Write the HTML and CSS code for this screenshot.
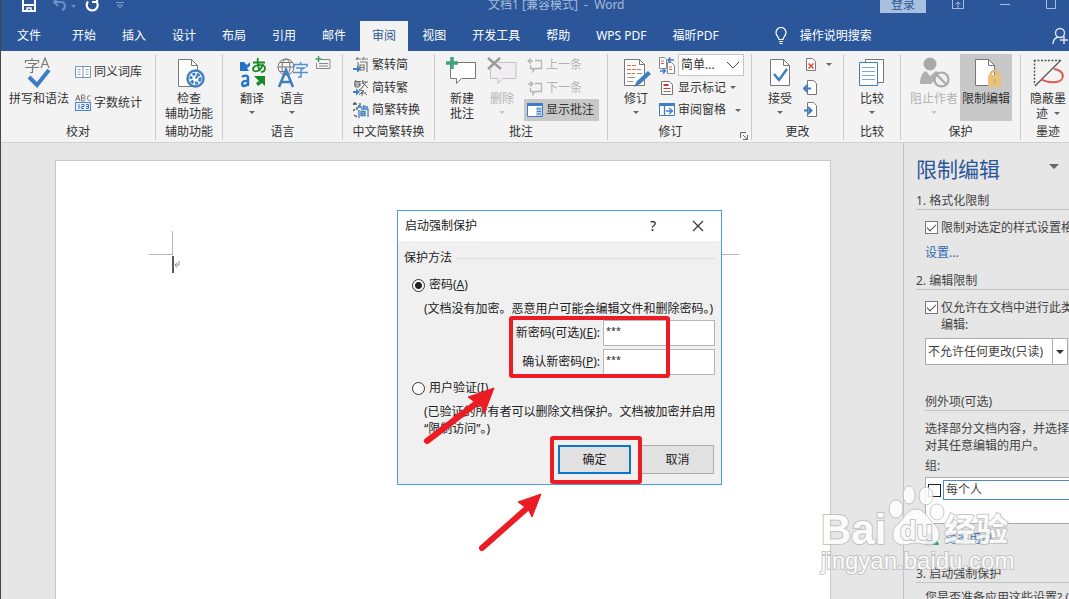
FILE: index.html
```html
<!DOCTYPE html>
<html lang="zh-CN">
<head>
<meta charset="utf-8">
<title>文档1 [兼容模式] - Word</title>
<link rel="stylesheet" href="styles.css">
</head>
<body>
<div class="app">
  <header class="titlebar">
    <div class="quick">
      <button class="ghost" aria-label="保存"><svg width="16" height="16" viewBox="0 0 16 16" fill="none" stroke="#fff" stroke-width="2"><path d="M2 1v13h12V1M2 8h12"/><path d="M6 14v-3h4v3" stroke-width="1.5"/></svg></button>
      <button class="ghost undo" aria-label="撤消"><svg width="26" height="16" viewBox="0 0 26 16" fill="none" stroke="#6f8fc4" stroke-width="2"><path d="M7 1L3 5l4 4M3 5h7c5 0 5 7 1 8"/><path d="M20 8h5l-2.500 3z" fill="#6f8fc4" stroke="none"/></svg></button>
      <button class="ghost" aria-label="重复"><svg width="16" height="16" viewBox="0 0 16 16" fill="none" stroke="#fff" stroke-width="2.200"><path d="M12 4A5.500 5.500 0 1 1 4 4.500M8 5h5V0"/></svg></button>
      <button class="ghost more" aria-label="自定义"><svg width="10" height="16" viewBox="0 0 10 16" fill="none" stroke="#7f9bcb"><path d="M1 5.500h8M2 8l3 3 3-3z"/></svg></button>
    </div>
    <div class="doc-title">文档1 [兼容模式]&nbsp; -&nbsp; Word</div>
    <div class="window-tools">
      <button class="login">登录</button>
      <button class="ghost" aria-label="功能区选项"><svg width="14" height="16" viewBox="0 0 14 16" fill="none" stroke="#a9bddd"><path d="M1.500 2.500h11v9h-11zM7 11V5M4.500 7.500L7 5l2.500 2.500"/></svg></button>
      <button class="ghost" aria-label="最小化"><svg width="12" height="16" viewBox="0 0 12 16" stroke="#a9bddd"><path d="M1 7.500h10"/></svg></button>
      <button class="ghost" aria-label="最大化"><svg width="12" height="16" viewBox="0 0 12 16" fill="none" stroke="#a9bddd"><path d="M1.500 1.500h9v10h-9z"/></svg></button>
    </div>
  </header>

  <nav class="tabs">
    <button class="tab file">文件</button>
    <button class="tab">开始</button>
    <button class="tab">插入</button>
    <button class="tab">设计</button>
    <button class="tab">布局</button>
    <button class="tab">引用</button>
    <button class="tab">邮件</button>
    <button class="tab active">审阅</button>
    <button class="tab">视图</button>
    <button class="tab">开发工具</button>
    <button class="tab">帮助</button>
    <button class="tab">WPS PDF</button>
    <button class="tab">福昕PDF</button>
    <button class="tell"><svg width="12" height="18" viewBox="0 0 12 18" fill="none" stroke="#fff" stroke-width="1.200"><path d="M4 12.500c0-2.500-3-3.500-3-7a5 5 0 0 1 10 0c0 3.500-3 4.500-3 7zM4 14.500h4M4.500 16.500h3"/></svg>操作说明搜索</button>
    <button class="ghost share" aria-label="共享"><svg width="16" height="18" viewBox="0 0 16 18" fill="none" stroke="#dfe8f5" stroke-width="1.400"><circle cx="8" cy="6" r="4.500"/><path d="M1 17c0-4 2-6 5-7M12 9v8M8 13h8"/></svg></button>
  </nav>

  <div class="ribbon">
    <section class="group g-proof">
      <div class="tools">
        <button class="big wide"><svg width="32" height="32" viewBox="0 0 32 32" fill="none"><g stroke="#7a7a7a" stroke-width="1.200"><path d="M9 1v2M2.500 6V3.500h13V6M5 6.500h8L9.500 9v6.500H7M2 10.500h14"/><path d="M18 11l4-10 4 10M19.500 7.500h5"/></g><path d="M6 20l8 8 12-15" stroke="#3b7cc4" stroke-width="4"/></svg><span>拼写和语法</span></button>
        <div class="stack two">
          <button class="small"><svg width="16" height="16" viewBox="0 0 16 16" fill="#fff" stroke="#7f93ad"><path d="M.500 2.500h15v11H.500zM8 2.500v11"/><path d="M2.500 5.500h3M2.500 8h3M2.500 10.500h3M10.500 5.500h3M10.500 8h3M10.500 10.500h3" stroke="#9ab"/></svg>同义词库</button>
          <button class="small"><svg width="16" height="18" viewBox="0 0 16 18" fill="none"><path d="M.500 7L3 1l2 6M1 5h4M6.500 1v6h2c2 0 2-3 0-3h-2M6.500 1h2c2 0 2 3 0 3M15.500 2c-4-2-4 6 0 4.500" stroke="#777"/><rect x=".500" y="8.500" width="15" height="8" fill="#e8f1fb" stroke="#4f86c6"/><path d="M4 10v5M6.500 10.500H9v2H6.500v2H9M11 10.500h2.500v4H11M11 12.500h2" stroke="#3c78c0"/></svg>字数统计</button>
        </div>
      </div>
      <h2>校对</h2>
    </section>

    <section class="group g-access">
      <div class="tools center">
        <button class="big"><svg width="32" height="32" viewBox="0 0 32 32"><path d="M5.500 2.500h13l6 6v21h-19z" fill="#fff" stroke="#777"/><path d="M18.500 2.500v6h6" fill="none" stroke="#777"/><circle cx="22.500" cy="21.500" r="8" fill="#fff" stroke="#3f7fc1" stroke-width="2.400"/><circle cx="22.500" cy="21.500" r="4.600" fill="none" stroke="#3f7fc1" stroke-width="3" stroke-dasharray="3 1.500"/><path d="M22.500 21.500l3-4" stroke="#3f7fc1" stroke-width="2"/></svg><span>检查<br>辅助功能</span></button>
      </div>
      <h2>辅助功能</h2>
    </section>

    <section class="group g-lang">
      <div class="tools">
        <button class="big narrow"><svg width="32" height="32" viewBox="0 0 32 32" fill="none"><path d="M4 5h4l3 3 3-3v4l-3 2 2 3H4z" fill="#2173c8"/><path d="M17 5.500h12M22 1c-1 5 0 9 2 13M27 7c-2 8-10 9-10 5 0-4 12-6 12-1 0 3-2 4-4 4" stroke="#158a25" stroke-width="1.800"/><path d="M6 20c2-2 6-2 6 1v8M12 24c-7-1-7 5-4 5 2 0 4-1 4-4" stroke="#2173c8" stroke-width="2.400"/><path d="M18 19h11v10l-3-3-4 3-2-3 3-2z" fill="#158a25"/></svg><span>翻译</span><i class="caret"></i></button>
        <button class="big narrow"><svg width="32" height="32" viewBox="0 0 32 32" fill="none"><g stroke="#777"><circle cx="10" cy="10" r="8"/><ellipse cx="10" cy="10" rx="4" ry="8"/><path d="M2 10h16M3.500 5.500h13M3.500 14.500h8"/></g><path d="M3 30l7-17 7 17M5.500 25h9" stroke="#3f7fc1" stroke-width="2.600"/><g stroke="#5390cf" stroke-width="1.500"><path d="M24.500 5v2M18 10V7.500h13V10M20 11h8l-3 2v7h-3M17 15.500h15"/></g></svg><span>语言</span><i class="caret"></i></button>
        <button class="small mini" aria-label="更新输入法词典"><svg width="16" height="16" viewBox="0 0 16 16" fill="none"><path d="M6 4.500h9v9H1.500V8M4 8.500h9M4 11h9" stroke="#888"/><path d="M3.500 1v6M.500 4h6" stroke="#35a06c" stroke-width="1.500"/></svg></button>
      </div>
      <h2>语言</h2>
    </section>

    <section class="group g-convert">
      <div class="tools">
        <div class="stack">
          <button class="small"><svg width="16" height="16" viewBox="0 0 16 16" fill="none"><path d="M5 0L3 3M4 2h4M11 0L9 3M10 2h5M5 5v10M7 5h7v10M7 8h4v5H7zM7 10.500h4" stroke="#777" stroke-width="1.200"/><path d="M0 11h4V8.500l4 3.500-4 3.500V13H0z" fill="#3f7fc1"/></svg>繁转简</button>
          <button class="small"><svg width="16" height="16" viewBox="0 0 16 16" fill="none"><path d="M3 0L1 3M2 1.500h6M2 3h5l-1 4H2zM1 5h7M10 0L9 4M9 2h6M13 2l-4 6M10 3l5 5M9 8l-3 2 5 1-3 2h5M9 12v4M6 15l2-2M12 13l2 2" stroke="#666"/><path d="M0 11h3V8.500l4 3.500-4 3.500V13H0z" fill="#3f7fc1"/></svg>简转繁</button>
          <button class="small"><svg width="16" height="16" viewBox="0 0 16 16" fill="none"><path d="M2 0L0 3M1 2h3M4 5v3M7 1v3M1 13l3 2M0 9l2-2" stroke="#555" stroke-width="1.300"/><path d="M6 3L5 6M6 5h3M11 3l-1 3M11 5h4M6 8v8M8 7h7v8M8 9.500h4v4H8zM8 11.500h4" stroke="#3f7fc1" stroke-width="1.300"/></svg>简繁转换</button>
        </div>
      </div>
      <h2>中文简繁转换</h2>
    </section>

    <section class="group g-comment">
      <div class="tools">
        <button class="big narrow"><svg width="32" height="32" viewBox="0 0 32 32"><path d="M4.500 5.500h25v16h-14l-5 5v-5h-6z" fill="#fff" stroke="#777"/><path d="M6 0v12M0 6h12" stroke="#43a27b" stroke-width="3.500"/></svg><span>新建<br>批注</span></button>
        <button class="big narrow off" disabled><svg width="32" height="32" viewBox="0 0 32 32" fill="none"><path d="M12 5.500h18v16H17l-5 5v-5H4.500V12" fill="#f1eef2" stroke="#c5bfc6"/><path d="M2 1l13 11M14 1L2 12" stroke="#9a9a9a" stroke-width="2.500"/></svg><span>删除</span><i class="caret"></i></button>
        <div class="stack">
          <button class="small off" disabled><svg width="16" height="16" viewBox="0 0 16 16" fill="none" stroke="#b4b4b4"><path d="M8 3.500h6.500v8H8l-2 3v-3H3.500V8M1 4h5M4 1.500L1 4l3 2.500" stroke-width="1.300"/></svg>上一条</button>
          <button class="small off" disabled><svg width="16" height="16" viewBox="0 0 16 16" fill="none" stroke="#b4b4b4"><path d="M8 3.500h6.500v8H8l-2 3v-3H3.500V8M1 4h5M3 1.500L6 4 3 6.500" stroke-width="1.300"/></svg>下一条</button>
          <button class="small pressed"><svg width="16" height="16" viewBox="0 0 16 16"><path d="M.500 1.500h15v13H.500z" fill="#fff" stroke="#3f7fc1"/><path d="M0 1h16v3H0z" fill="#3f7fc1"/><path d="M9 5h6v9H9z" fill="#b8d4ee"/><path d="M10 7h4M10 9.500h4M10 12h4" stroke="#3f7fc1"/></svg>显示批注</button>
        </div>
      </div>
      <h2>批注</h2>
    </section>

    <section class="group g-track">
      <div class="tools">
        <button class="big narrow"><svg width="32" height="32" viewBox="0 0 32 32"><path d="M4.500 2.500h15l5 5v21h-20z" fill="#fff" stroke="#777"/><path d="M19.500 2.500v5h5" fill="none" stroke="#777"/><path d="M7 8.500h10M7 12.500h15M7 16.500h8" stroke="#d96a55" stroke-dasharray="4 1"/><path d="M7 20.500h8M7 24.500h6M17 16.500h5" stroke="#999"/><path d="M14 30l3-6 11-10 3 3-11 10z" fill="#3f7fc1"/></svg><span>修订</span><i class="caret"></i></button>
        <div class="stack">
          <div class="row"><svg width="16" height="18" viewBox="0 0 16 18" fill="#fff"><path d="M.500 1.500h5l2 2v9h-7zM8.500 6.500h4l3 3v8h-7z" stroke="#888"/><path d="M2 5h3M2 7.500h3M10 11h3M10 13.500h3" stroke="#dc5b45"/><path d="M15 4H9m2.500-2.500L9 4l2.500 2.500M1 15h5m-2-2.500L6.500 15 4 17.500" fill="none" stroke="#3f7fc1" stroke-width="1.500"/></svg>
            <label class="markup"><select aria-label="显示以供审阅"><option>简单...</option></select><svg width="14" height="8" viewBox="0 0 14 8" fill="none" stroke="#444"><path d="M1 1l6 6 6-6"/></svg></label></div>
          <button class="small"><svg width="16" height="16" viewBox="0 0 16 16"><path d="M2.500 1.500h8l3 3v10h-11z" fill="#fff" stroke="#777"/><path d="M4.500 5h5" stroke="#d33" stroke-width="2"/><path d="M4.500 8.500h7" stroke="#d33"/><path d="M4.500 11.500h7" stroke="#777"/></svg>显示标记<i class="caret"></i></button>
          <button class="small"><svg width="16" height="16" viewBox="0 0 16 16"><path d="M.500 1.500h15v12H.500z" fill="#fff" stroke="#3f7fc1"/><path d="M0 1h16v3H0z" fill="#3f7fc1"/><path d="M5.500 4v10M7 9h6M10 6l3.500 3-3.500 3" fill="none" stroke="#3f7fc1" stroke-width="1.300"/></svg>审阅窗格<i class="caret far"></i></button>
        </div>
      </div>
      <h2>修订</h2>
      <button class="ghost launcher" aria-label="修订选项"><svg width="8" height="8" viewBox="0 0 8 8" fill="none" stroke="#666"><path d="M.500 6V.500H6M3 3l4 4M7.500 3v4.500H3"/></svg></button>
    </section>

    <section class="group g-change">
      <div class="tools">
        <button class="big narrow"><svg width="32" height="32" viewBox="0 0 32 32"><path d="M6.500 2.500h13l6 6v20h-19z" fill="#fff" stroke="#777"/><path d="M19.500 2.500v6h6" fill="none" stroke="#777"/><path d="M10 17l5 6 8-11" fill="none" stroke="#3f7fc1" stroke-width="2.500"/></svg><span>接受</span><i class="caret"></i></button>
        <div class="stack">
          <button class="small" aria-label="拒绝"><svg width="16" height="16" viewBox="0 0 16 16"><path d="M3.500 1.500h6l3 3v9h-9z" fill="#fff" stroke="#777"/><path d="M5.500 6.500l5 5M10.500 6.500l-5 5" stroke="#d9482f" stroke-width="1.500"/></svg><i class="caret"></i></button>
          <button class="small" aria-label="上一处"><svg width="16" height="16" viewBox="0 0 16 16"><path d="M4.500 .500h6l3 3v11h-9z" fill="#fff" stroke="#777"/><path d="M1 8.500h7M4.500 5L1 8.500 4.500 12" fill="none" stroke="#3f7fc1" stroke-width="2"/></svg></button>
          <button class="small" aria-label="下一处"><svg width="16" height="16" viewBox="0 0 16 16"><path d="M4.500 .500h6l3 3v11h-9z" fill="#fff" stroke="#777"/><path d="M1 8.500h7M5 5l3.500 3.500L5 12" fill="none" stroke="#3f7fc1" stroke-width="2"/></svg></button>
        </div>
      </div>
      <h2>更改</h2>
    </section>

    <section class="group g-compare">
      <div class="tools center">
        <button class="big"><svg width="32" height="32" viewBox="0 0 32 32"><path d="M9.500 2.500h18v23h-18z" fill="#fff" stroke="#777"/><path d="M3.500 5.500h18v23h-18z" fill="#fff" stroke="#3f7fc1"/><path d="M6 10.500h13M6 14.500h13M6 18.500h13M6 22.500h13" stroke="#7aa9da"/></svg><span>比较</span><i class="caret"></i></button>
      </div>
      <h2>比较</h2>
    </section>

    <section class="group g-protect">
      <div class="tools">
        <button class="big off" disabled><svg width="32" height="32" viewBox="0 0 32 32"><circle cx="12" cy="7" r="6.500" fill="#a9a9a9"/><path d="M2 27c0-8 3-12 6-13l4 5 6-5c3 1 3 3 3 5l-8 8z" fill="#b0b0b0"/><circle cx="23.500" cy="22.500" r="7" fill="#f0f0f0" stroke="#a9a9a9" stroke-width="2.200"/><path d="M18.500 17.500l10 10" stroke="#a9a9a9" stroke-width="2.200"/></svg><span>阻止作者</span><i class="caret"></i></button>
        <button class="big pressed"><svg width="32" height="32" viewBox="0 0 32 32"><path d="M5.500 2.500h13l6 6v20h-19z" fill="#fff" stroke="#777"/><path d="M18.500 2.500v6h6" fill="none" stroke="#777"/><path d="M20.500 20v-2a3.500 3.500 0 0 1 8 0v2" fill="none" stroke="#e7ba6b" stroke-width="2.500"/><rect x="18" y="18" width="13" height="12" rx="1" fill="#eac17d"/><path d="M24.500 22v4" stroke="#d9ab63" stroke-width="2"/></svg><span>限制编辑</span></button>
      </div>
      <h2>保护</h2>
    </section>

    <section class="group g-ink">
      <div class="tools center">
        <button class="big"><svg width="32" height="32" viewBox="0 0 32 32" fill="none"><path d="M2 3.500h26M2.500 3v25" stroke="#555" stroke-width="1.400" stroke-dasharray="2 1.500"/><path d="M3 29L29 3" stroke="#555" stroke-width="1.300"/><path d="M22 12c12 2 11 12 2 13-8 1-12-1-15-3" stroke="#dc5b4b" stroke-width="2"/></svg><span>隐蔽墨<br>迹<i class="caret inline"></i></span></button>
      </div>
      <h2>墨迹</h2>
    </section>
  </div>

  <main class="workspace">
    <div class="canvas">
      <article class="page">
        <div class="marks"><span class="mark left"></span><span class="mark right"></span></div>
        <p class="caret-line"><svg width="10" height="18" viewBox="0 0 10 18" fill="none"><path d="M1 0v17" stroke="#222" stroke-width="1.500"/><path d="M7 5v4H3M5 6.500L3 9l2 2.500" stroke="#888"/></svg></p>
      </article>
    </div>

    <aside class="pane">
      <div class="pane-head"><h1>限制编辑</h1><button class="ghost" aria-label="任务窗格选项"><i class="caret big-caret"></i></button></div>
      <h3 class="first">1. 格式化限制</h3>
      <label class="check"><input type="checkbox" checked><span>限制对选定的样式设置格式</span></label>
      <a class="settings" href="#settings">设置...</a>
      <h3>2. 编辑限制</h3>
      <label class="check"><input type="checkbox" checked><span>仅允许在文档中进行此类型的<br>编辑:</span></label>
      <label class="combo"><select aria-label="编辑限制类型"><option>不允许任何更改(只读)</option></select><span class="drop"><i class="caret dark"></i></span></label>
      <div class="inner">
        <h4>例外项(可选)</h4>
        <p class="hint">选择部分文档内容，并选择可以<br>对其任意编辑的用户。</p>
        <p class="group-label">组:</p>
        <div class="list"><label class="everyone"><input type="checkbox"><span>每个人</span></label></div>
        <a class="users" href="#users"><svg width="14" height="14" viewBox="0 0 14 14"><circle cx="5" cy="4" r="3" fill="#4f86c6"/><path d="M0 13c0-7 9-7 10 0z" fill="#4f86c6"/><path d="M8 13c0-6 5-6 6 0z" fill="#3da56e"/></svg>更多用户...</a>
      </div>
      <h3 class="third">3. 启动强制保护</h3>
      <p class="ready">您是否准备应用这些设置? (您</p>
    </aside>
  </main>

  <form class="dialog" role="dialog" aria-labelledby="dialog-title">
    <div class="dialog-bar">
      <span id="dialog-title">启动强制保护</span>
      <button type="button" class="ghost help" aria-label="帮助">?</button>
      <button type="button" class="ghost" aria-label="关闭"><svg width="12" height="12" viewBox="0 0 12 12" stroke="#333" stroke-width="1.200"><path d="M1 1l10 10M11 1L1 11"/></svg></button>
    </div>
    <div class="dialog-body">
      <div class="legend">保护方法</div>
      <label class="radio"><input type="radio" name="method" checked><span>密码(<u>A</u>)</span></label>
      <p class="note">(文档没有加密。恶意用户可能会编辑文件和删除密码。)</p>
      <div class="fields">
        <label for="pw1">新密码(可选)(<u>E</u>):</label><input id="pw1" type="text" value="***">
        <label for="pw2">确认新密码(<u>P</u>):</label><input id="pw2" type="text" value="***">
      </div>
      <label class="radio"><input type="radio" name="method"><span>用户验证(<u>I</u>)</span></label>
      <p class="note">(已验证的所有者可以删除文档保护。文档被加密并启用<br>“限制访问”。)</p>
      <div class="actions"><button type="button" class="ok">确定</button><button type="button">取消</button></div>
    </div>
  </form>

  <svg class="annotations" width="1069" height="599" viewBox="0 0 1069 599" fill="none" stroke="#ec1c24">
    <rect x="511" y="318" width="157" height="58" rx="1" stroke-width="4"/>
    <rect x="552" y="438" width="88" height="44" rx="1" stroke-width="4"/>
    <path d="M427 441L478 402M482 548L526 509" stroke-width="6" stroke-linecap="round"/>
    <path d="M494 388L468 397L476 403L482 407L484 414zM541 494L518 502L525 507L529 511L532 517z" fill="#ec1c24" stroke-width="1"/>
  </svg>

  <svg class="watermark" width="200" height="100" viewBox="0 0 200 100" fill="#fff" stroke="#bdbdbd">
    <text x="2" y="62" class="wm-latin">Bai</text>
    <ellipse cx="77" cy="27" rx="7" ry="9"/><ellipse cx="90" cy="13" rx="6" ry="9"/><ellipse cx="107" cy="14" rx="7" ry="9"/><ellipse cx="118" cy="30" rx="7" ry="8"/>
    <path d="M97 27c9 0 12 10 19 16 8 8 4 20-6 20-5 0-8-2-13-2s-8 2-13 2c-10 0-14-12-6-20 7-6 10-16 19-16z"/>
    <text x="81" y="58" class="wm-du">du</text>
    <text x="125" y="59" class="wm-cjk">经验</text>
    <text x="2" y="87" class="wm-url">jingyan.baidu.com</text>
  </svg>
</div>
</body>
</html>
```

FILE: styles.css
```css
* { box-sizing: border-box; }
body, h1, h2, h3, h4, p { margin: 0; font-weight: normal; }
body {
  font: 12px/16px "Noto Sans", "Noto Sans CJK SC", sans-serif;
  color: #333;
  overflow: hidden;
}
button, select, input { font: inherit; color: inherit; margin: 0; }
button { border: 0; padding: 0; background: none; }
svg { display: block; flex: none; }

.app {
  position: relative;
  display: flex;
  flex-direction: column;
  height: 100vh;
  border-left: 1px solid #45464a;
  background: #e6e6e6;
  overflow: hidden;
}

/* Title bar and tabs */
.titlebar {
  display: flex;
  align-items: flex-end;
  height: 21px;
  padding-bottom: 8px;
  background: #2b579a;
}
.quick { display: flex; flex: 0 0 487px; padding-left: 20px; }
.undo { margin-left: 14px; }
.quick .undo + .ghost { margin-left: 7px; }
.more { margin-left: 15px; }
.doc-title { color: #a6b9d9; white-space: nowrap; }
.window-tools { display: flex; gap: 34px; margin-left: auto; padding-right: 12px; }
.login { width: 46px; background: #a9bfde; color: #2b579a; margin-right: -9px; }
.tabs { display: flex; height: 30px; background: #2b579a; color: #fff; }
.tab { margin: 0 1px; padding: 0 12px; white-space: nowrap; }
.tab.file { padding: 0 15px; margin-right: 3px; }
.tab.active { background: #f3f3f3; color: #2b579a; }
.tell { display: flex; align-items: center; gap: 13px; margin-left: 43px; white-space: nowrap; }
.share { margin-left: auto; padding-right: 1px; }

/* Ribbon */
.ribbon {
  display: flex;
  height: 92px;
  padding: 3px 0 2px;
  background: #f3f3f3;
  border-bottom: 1px solid #d2d2d2;
}
.group {
  position: relative;
  flex: none;
  display: flex;
  flex-direction: column;
  border-right: 1px solid #cacaca;
}
.group h2 { font-size: 12px; line-height: 16px; text-align: center; margin-top: 3px; white-space: nowrap; }
.tools { display: flex; height: 67px; }
.tools.center { justify-content: center; }
.big {
  display: flex;
  flex-direction: column;
  align-items: center;
  width: 52px;
  padding-top: 3px;
  line-height: 15px;
  white-space: nowrap;
}
.big.wide { width: 64px; }
.big.narrow { width: 40px; }
.big svg { margin-bottom: 2px; }
.off { color: #b3b3b3; }
.pressed { background: #c8c8c8; }
.stack { display: flex; flex-direction: column; }
.small, .row { display: flex; align-items: center; gap: 3px; height: 22px; white-space: nowrap; }
.small + .small, .row + .small { margin-top: 1px; }
.stack.two { padding: 7px 0 0 4px; }
.stack.two .small + .small { margin-top: 9px; }
.caret {
  display: block;
  border: 3px solid transparent;
  border-top-color: #666;
  border-bottom-width: 0;
  margin: 5px 0 0;
}
.small .caret { margin: 0 0 0 1px; }
.small .caret.far { margin-left: 6px; }
.caret.inline { display: inline-block; margin: 0 0 3px 6px; }
.off .caret { border-top-color: #c8c8c8; }
.caret.big-caret { border-width: 5px 5px 0; margin: 0; }
.caret.dark { border-width: 4px 4px 0; margin: 0; border-top-color: #333; }

.g-proof { width: 155px; }
.g-proof .tools { padding-left: 6px; }
.g-access { width: 67px; }
.g-lang { width: 120px; }
.g-lang .tools { padding-left: 9px; }
.mini { margin-left: 3px; height: 18px; }
.g-convert { width: 92px; }
.g-convert .tools { padding-left: 10px; }
.g-comment { width: 173px; }
.g-comment .tools { padding-left: 7px; }
.g-comment .big + .stack { padding-left: 2px; }
.g-comment .small { padding: 0 5px 0 3px; }
.g-track { width: 144px; }
.g-track .tools { padding-left: 8px; }
.g-track .stack { padding-left: 3px; }
.g-track h2 { padding-right: 18px; }
.launcher { position: absolute; right: 3px; bottom: 0; }
.g-change { width: 92px; }
.g-change .tools { padding-left: 8px; }
.g-change .stack { padding-left: 3px; }
.g-change .small .caret { margin-left: 4px; }
.g-compare { width: 57px; }
.g-protect { width: 120px; }
.g-protect .tools { padding-left: 7px; }
.g-ink { flex: 1 0 54px; border-right: 0; }
.markup {
  display: flex;
  align-items: center;
  width: 66px;
  height: 22px;
  padding-right: 3px;
  background: #fff;
  border: 1px solid #c6c6c6;
}
.markup select, .combo select { appearance: none; border: 0; background: none; padding: 0 0 0 2px; flex: 1; min-width: 0; }

/* Document */
.workspace { display: flex; flex: 1; min-height: 0; }
.canvas { flex: 1; display: flex; padding: 17px 72px 0 54px; }
.page { flex: 1; padding: 70px 91px 0 93px; background: #fff; border: 1px solid #c9c9c9; border-bottom: 0; }
.marks { display: flex; justify-content: space-between; }
.mark { width: 24px; height: 24px; border-bottom: 1px solid #b5b5b5; }
.mark.left { border-right: 1px solid #b5b5b5; }
.mark.right { border-left: 1px solid #b5b5b5; }
.caret-line { padding: 1px 0 0 23px; }

/* Restrict editing pane */
.pane {
  flex: 0 0 166px;
  padding: 14px 0 0 12px;
  border-left: 1px solid #c2c2c2;
  overflow: hidden;
  white-space: nowrap;
  color: #444;
}
.pane-head { display: flex; align-items: center; justify-content: space-between; height: 24px; padding-right: 10px; }
.pane-head .ghost { padding-bottom: 6px; }
h1 { font-size: 21px; line-height: 24px; color: #2b579a; }
h3, h4 { font-size: 12px; line-height: 16px; border-bottom: 1px solid #c4c4c4; }
h3 { margin-top: 12px; }
.check { display: flex; gap: 3px; padding-left: 9px; margin-top: 9px; line-height: 17px; }
input[type="checkbox"] {
  appearance: none;
  flex: none;
  display: grid;
  place-content: center;
  width: 13px;
  height: 13px;
  margin-top: 2px;
  border: 1px solid #777;
  background: #fff;
}
input[type="checkbox"]:checked::before {
  content: "";
  width: 8px;
  height: 4px;
  margin-bottom: 3px;
  border: solid #444;
  border-width: 0 0 1px 1px;
  transform: rotate(-45deg);
}
.settings { display: block; margin: 9px 0 0 9px; }
a { color: #2f6cb5; text-decoration: none; }
.combo { display: flex; height: 27px; margin: 5px 1px 0 9px; background: #fff; border: 1px solid #ababab; }
.drop { display: grid; place-content: center; width: 15px; border-left: 1px solid #ababab; }
.inner { padding-left: 9px; margin-top: 29px; }
.hint { margin-top: 9px; line-height: 17px; }
.group-label { margin-top: 4px; }
.list { height: 47px; margin-top: 3px; padding: 2px 0 0 2px; background: #fff; border: 1px solid #ababab; border-right: 0; }
.everyone { display: flex; gap: 2px; }
.everyone input[type="checkbox"] { margin-top: 4px; border-color: #222; }
.everyone span { flex: 1; padding: 1px 2px; border: 1px solid #4f86c6; border-right: 0; }
.users { display: flex; align-items: center; gap: 6px; margin-top: 7px; }
.third { margin-top: 19px; }
.ready { margin: 7px 0 0 9px; }

/* Dialog */
.dialog {
  position: absolute;
  left: 396px;
  top: 210px;
  width: 325px;
  background: #f0f0f0;
  border: 1px solid #4a9fe0;
  color: #222;
}
.dialog-bar { display: flex; align-items: center; height: 30px; padding: 0 17px 0 7px; background: #fff; }
.help { margin: 0 36px 0 auto; font-size: 14px; }
.dialog-body { padding: 9px 6px 10px; }
.legend { display: flex; align-items: center; gap: 5px; }
.legend::after { content: ""; flex: 1; border-top: 1px solid #dcdcdc; }
.radio { display: flex; align-items: center; gap: 4px; padding-left: 8px; margin-top: 11px; }
.radio input {
  appearance: none;
  width: 13px;
  height: 13px;
  border: 1px solid #333;
  border-radius: 50%;
  background: #fff;
}
.radio input:checked { background: radial-gradient(#222 3px, #fff 4px); }
.note { margin-top: 7px; padding-left: 20px; white-space: nowrap; line-height: 17px; }
.fields {
  display: grid;
  grid-template-columns: 1fr 112px;
  align-items: center;
  gap: 3px;
  margin-top: 3px;
  text-align: right;
}
.fields input { width: 100%; height: 26px; padding: 0 2px 5px; border: 1px solid #b5b5b5; background: #fff; font-size: 9px; }
.fields + .radio { margin-top: 5px; }
.actions { display: flex; justify-content: flex-end; gap: 10px; margin-top: 8px; padding-right: 1px; }
.actions button { width: 73px; height: 29px; background: #e1e1e1; border: 1px solid #adadad; }
.actions .ok { border: 2px solid #0f75c8; }

/* Overlays */
.annotations { position: absolute; left: -1px; top: 0; pointer-events: none; }
.watermark { position: absolute; left: 818px; top: 482px; pointer-events: none; opacity: 0.85; overflow: visible; }
.watermark text { paint-order: stroke; stroke-width: 2px; }
.wm-latin { font: bold 42px "Liberation Sans", sans-serif; }
.wm-du { font: bold 27px "Liberation Sans", sans-serif; }
.wm-cjk { font: bold 32px "Noto Sans CJK SC", sans-serif; }
.wm-url { font: 24px "Liberation Sans", sans-serif; }
```
